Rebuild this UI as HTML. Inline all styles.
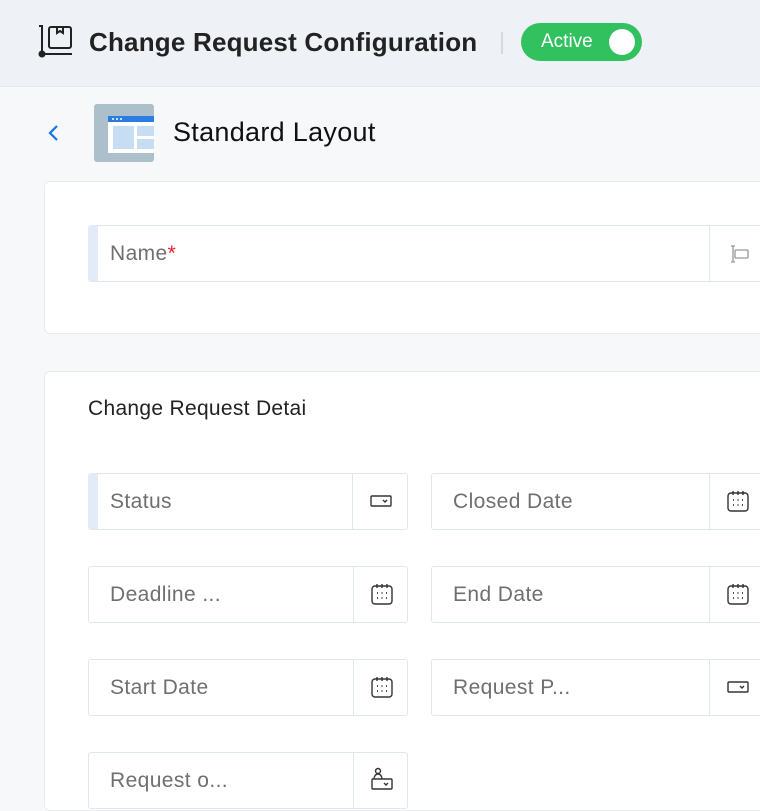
<!DOCTYPE html>
<html><head><style>
*{box-sizing:border-box;margin:0;padding:0}
body{width:760px;height:790px;overflow:hidden;background:#f7f8fa;font-family:"Liberation Sans",sans-serif;position:relative}
.hdr{position:absolute;left:0;top:0;width:760px;height:87px;background:#eef1f6;border-bottom:1px solid #e3e7ee}
.t{position:absolute;left:89px;top:27px;font-size:26px;font-weight:bold;color:#222;letter-spacing:0.2px}
.sep{position:absolute;left:501px;top:32px;width:2px;height:22px;background:#d5d9df}
.tog{position:absolute;left:521px;top:23px;width:121px;height:38px;border-radius:19px;background:#32c15f}
.tog span{position:absolute;left:20px;top:8px;color:#fff;font-size:19px}
.tog i{position:absolute;right:7px;top:6px;width:26px;height:26px;border-radius:50%;background:#fff}
.card{position:absolute;left:44px;width:740px;background:#fff;border:1px solid #e8eaee;border-radius:6px}
.f{position:absolute;height:57px;background:#fff;border:1px solid #dfe6f0;border-radius:3px}
.f.m{border-left:10px solid #e3ebf8}
.f .l{position:absolute;left:21px;top:16px;font-size:21px;color:#6f6f6f;letter-spacing:0.4px}
.f.m .l{left:12px}
.f .d{position:absolute;top:0;bottom:0;width:1px;background:#dfe6f0}
.ic{position:absolute}
</style></head><body>
<div class="hdr">
<svg class="ic" style="left:37px;top:24px" width="36" height="34" viewBox="0 0 36 34" fill="none" stroke="#222" stroke-width="2"><path d="M2 2h3v27"/><circle cx="5" cy="30" r="2.5" fill="#222"/><path d="M8 30h27"/><rect x="12" y="3" width="22" height="21" rx="2"/><path d="M20 3v6l3-2 3 2V3"/></svg>
<div class="t">Change Request Configuration</div>
<div class="sep"></div>
<div class="tog"><span>Active</span><i></i></div>
</div>
<svg class="ic" style="left:47px;top:124px" width="12" height="18" viewBox="0 0 12 18" fill="none" stroke="#1a73e8" stroke-width="2.2"><path d="M10 2L3 9l7 7"/></svg>
<svg class="ic" style="left:94px;top:104px" width="60" height="58" viewBox="0 0 60 58"><rect width="60" height="58" rx="3" fill="#aebfcc"/><rect x="14" y="12" width="46" height="37" fill="#fff"/><rect x="14" y="12" width="46" height="6" fill="#2b7de1"/><circle cx="19" cy="15" r="1" fill="#fff"/><circle cx="23" cy="15" r="1" fill="#fff"/><circle cx="27" cy="15" r="1" fill="#fff"/><rect x="19" y="22" width="21" height="23" fill="#c6ddf4"/><rect x="43" y="22" width="17" height="10" fill="#c6ddf4"/><rect x="43" y="35" width="17" height="10" fill="#c6ddf4"/></svg>
<div style="position:absolute;left:173px;top:117px;font-size:27px;color:#111;letter-spacing:0.3px">Standard Layout</div>

<div class="card" style="top:181px;height:153px"></div>
<div class="f m" style="left:88px;top:225px;width:700px"><div class="l">Name<span style="color:#e8202a">*</span></div><div class="d" style="left:611px"></div>
<svg class="ic" style="left:628px;top:18px" width="24" height="20" viewBox="0 0 24 20" fill="none" stroke="#999" stroke-width="1.3"><path d="M5 2h4M5 18h4M7 2v16"/><rect x="9" y="6" width="13" height="8" rx="1"/></svg></div>

<div class="card" style="top:371px;height:440px"></div>
<div style="position:absolute;left:88px;top:397px;font-size:21px;color:#222;width:218px;overflow:hidden;white-space:nowrap;letter-spacing:0.3px">Change Request Details</div>

<div class="f m" style="left:88px;top:473px;width:320px"><div class="l">Status</div><div class="d" style="left:254px"></div>
<svg class="ic" style="left:272px;top:20px" width="22" height="14" viewBox="0 0 22 14" fill="none" stroke="#333" stroke-width="1.4"><rect x="1" y="2" width="20" height="10" rx="1"/><path d="M13 6l2 2 2-2"/></svg></div>
<div class="f" style="left:431px;top:473px;width:360px"><div class="l">Closed Date</div><div class="d" style="left:277px"></div>
<svg class="ic" style="left:295px;top:16px" width="22" height="22" viewBox="0 0 22 22" fill="none" stroke="#333" stroke-width="1.4"><rect x="1" y="3" width="20" height="18" rx="3"/><path d="M6 1v4M11 1v4M16 1v4"/><g stroke-width="1.8"><path d="M6 10h1M10.5 10h1M15 10h1M6 15h1M10.5 15h1M15 15h1"/></g></svg></div>

<div class="f" style="left:88px;top:566px;width:320px"><div class="l">Deadline ...</div><div class="d" style="left:264px"></div>
<svg class="ic" style="left:282px;top:16px" width="22" height="22" viewBox="0 0 22 22" fill="none" stroke="#333" stroke-width="1.4"><rect x="1" y="3" width="20" height="18" rx="3"/><path d="M6 1v4M11 1v4M16 1v4"/><g stroke-width="1.8"><path d="M6 10h1M10.5 10h1M15 10h1M6 15h1M10.5 15h1M15 15h1"/></g></svg></div>
<div class="f" style="left:431px;top:566px;width:360px"><div class="l">End Date</div><div class="d" style="left:277px"></div>
<svg class="ic" style="left:295px;top:16px" width="22" height="22" viewBox="0 0 22 22" fill="none" stroke="#333" stroke-width="1.4"><rect x="1" y="3" width="20" height="18" rx="3"/><path d="M6 1v4M11 1v4M16 1v4"/><g stroke-width="1.8"><path d="M6 10h1M10.5 10h1M15 10h1M6 15h1M10.5 15h1M15 15h1"/></g></svg></div>

<div class="f" style="left:88px;top:659px;width:320px"><div class="l">Start Date</div><div class="d" style="left:264px"></div>
<svg class="ic" style="left:282px;top:16px" width="22" height="22" viewBox="0 0 22 22" fill="none" stroke="#333" stroke-width="1.4"><rect x="1" y="3" width="20" height="18" rx="3"/><path d="M6 1v4M11 1v4M16 1v4"/><g stroke-width="1.8"><path d="M6 10h1M10.5 10h1M15 10h1M6 15h1M10.5 15h1M15 15h1"/></g></svg></div>
<div class="f" style="left:431px;top:659px;width:360px"><div class="l">Request P...</div><div class="d" style="left:277px"></div>
<svg class="ic" style="left:295px;top:20px" width="22" height="14" viewBox="0 0 22 14" fill="none" stroke="#333" stroke-width="1.4"><rect x="1" y="2" width="20" height="10" rx="1"/><path d="M13 6l2 2 2-2"/></svg></div>

<div class="f" style="left:88px;top:752px;width:320px"><div class="l">Request o...</div><div class="d" style="left:264px"></div>
<svg class="ic" style="left:282px;top:14px" width="22" height="24" viewBox="0 0 22 24" fill="none" stroke="#333" stroke-width="1.4"><circle cx="7" cy="4" r="2.5"/><path d="M3 12c0-3 2-5 4-5s4 2 4 5"/><rect x="1" y="12" width="20" height="10" rx="1"/><path d="M13 16l2 2 2-2"/></svg></div>
</body></html>
